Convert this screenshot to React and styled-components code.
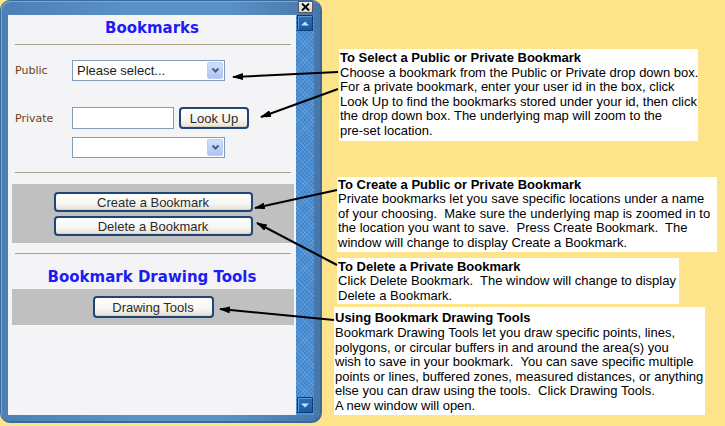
import React from 'react';
import styled, { createGlobalStyle } from 'styled-components';

const Global = createGlobalStyle`
  html, body { margin: 0; padding: 0; }
  body {
    width: 725px; height: 426px; overflow: hidden;
    background: #fde48b;
    font-family: "Liberation Sans", Arial, sans-serif;
  }
`;

const Page = styled.div`
  position: relative;
  width: 725px;
  height: 426px;
  display: flex;
  align-items: flex-start;
  background: #fde48b;
`;

const Window = styled.div`
  width: 322px;
  height: 423px;
  box-sizing: border-box;
  flex-shrink: 0;
  border: 1px solid #3c6b9b;
  border-radius: 10px;
  background: linear-gradient(90deg, #4b80b6 0%, #5a91c7 40%, #5a91c7 70%, #4677ab 100%);
  box-shadow: inset 1px 1px 0 #7aa8d6, inset -1px -1px 0 #3a6898;
  padding: 0 7px 7px 7px;
  display: flex;
  flex-direction: column;
`;

const TitleBar = styled.div`
  height: 14px;
  display: flex;
  justify-content: flex-end;
  align-items: flex-start;
`;

const CloseButton = styled.div`
  width: 15px;
  height: 12px;
  box-sizing: border-box;
  margin-right: 1px;
  background: linear-gradient(#f0f0f0, #d2d2d2);
  border: 1px solid #5a5a5a;
  display: flex;
  align-items: center;
  justify-content: center;
`;

const Body = styled.div`
  flex: 1;
  display: flex;
  min-height: 0;
`;

const Content = styled.div`
  width: 288px;
  background: #f4f4f7;
  display: flex;
  flex-direction: column;
`;

const Scrollbar = styled.div`
  width: 18px;
  display: flex;
  flex-direction: column;
  justify-content: space-between;
  align-items: flex-start;
  background-color: #3f86cf;
  background-image:
    repeating-linear-gradient(45deg, rgba(255,255,255,0.13) 0 1px, transparent 1px 3px),
    repeating-linear-gradient(-45deg, rgba(255,255,255,0.10) 0 1px, transparent 1px 3px);
`;

const ScrollButton = styled.div`
  width: 16px;
  height: 16px;
  box-sizing: border-box;
  margin-left: 1px;
  margin-bottom: ${p => (p.$down ? '2px' : '0')};
  background: linear-gradient(#2a6fbd, #1b5aa3);
  border: 1px solid #0e3b72;
  box-shadow: inset 1px 1px 0 #5e97d6;
  display: flex;
  align-items: center;
  justify-content: center;
`;

const Heading = styled.div`
  margin-top: ${p => p.$mt}px;
  line-height: 20px;
  font-family: "DejaVu Sans", Verdana, sans-serif;
  font-weight: bold;
  font-size: 15px;
  color: #1c1cf5;
  text-align: center;
`;

const Rule = styled.div`
  margin: ${p => p.$mt}px 5px 0 7px;
  border-top: 1px solid #aaa18a;
`;

const FormRow = styled.div`
  display: flex;
  align-items: center;
  margin-top: ${p => p.$mt}px;
  padding-left: ${p => (p.$indent ? 64 : 7)}px;
`;

const Label = styled.div`
  width: 57px;
  font-family: "DejaVu Sans", Verdana, sans-serif;
  font-size: 11px;
  color: #6b3e1c;
`;

const SelectBox = styled.div`
  width: 153px;
  height: 21px;
  box-sizing: border-box;
  border: 1px solid #7f9db9;
  background: #fff;
  display: flex;
  align-items: center;
  justify-content: space-between;
  padding: 1px 1px 1px 4px;
  font-size: 13px;
  color: #1a1a1a;
`;

const SelectArrow = styled.div`
  width: 16px;
  height: 17px;
  box-sizing: border-box;
  border: 1px solid #bccdf5;
  border-radius: 2px;
  background: linear-gradient(#d2e0fc, #adc4f3);
  display: flex;
  align-items: center;
  justify-content: center;
`;

const TextInput = styled.div`
  width: 102px;
  height: 22px;
  box-sizing: border-box;
  border: 1px solid #7f9db9;
  background: #fff;
`;

const Button = styled.div`
  width: ${p => p.$w}px;
  height: ${p => p.$h}px;
  box-sizing: border-box;
  margin-left: ${p => p.$ml || 0}px;
  border: 2px solid #1f4476;
  border-radius: 4px;
  background: linear-gradient(#ffffff 0%, #f6f5f0 60%, #e4e1d5 100%);
  box-shadow: inset 0 -1px 0 #d6d2c2;
  display: flex;
  align-items: center;
  justify-content: center;
  font-size: 13px;
  color: #2b2b2b;
`;

const Band = styled.div`
  margin: ${p => p.$mt}px 2px 0 4px;
  height: ${p => p.$h}px;
  box-sizing: border-box;
  padding-top: ${p => p.$pt}px;
  background: #c0c0c0;
  display: flex;
  flex-direction: column;
  align-items: center;
  gap: 4px;
`;

const RightColumn = styled.div`
  flex: 1;
  display: flex;
  flex-direction: column;
  align-items: flex-start;
`;

const Callout = styled.div`
  margin-top: ${p => p.$mt}px;
  margin-left: ${p => p.$ml}px;
  width: ${p => p.$w}px;
  box-sizing: border-box;
  padding: ${p => p.$pt}px 2px ${p => p.$pb}px 1px;
  background: #ffffff;
  font-size: 13px;
  line-height: 14.6px;
  color: #000;
`;

const CalloutTitle = styled.div`
  font-weight: bold;
  white-space: pre;
`;

const CalloutLine = styled.div`
  white-space: pre;
`;

const Overlay = styled.svg`
  position: absolute;
  left: 0;
  top: 0;
  pointer-events: none;
`;

const Chevron = () => (
  <svg width="9" height="7" viewBox="0 0 9 7">
    <polyline points="1.5,1.5 4.5,4.5 7.5,1.5" fill="none" stroke="#4b5f86" strokeWidth="2" />
  </svg>
);

const Select = ({ children }) => (
  <SelectBox>
    <span>{children}</span>
    <SelectArrow><Chevron /></SelectArrow>
  </SelectBox>
);

const callouts = [
  {
    mt: 49, ml: 17, w: 359, pt: 2, pb: 2,
    title: 'To Select a Public or Private Bookmark',
    lines: [
      'Choose a bookmark from the Public or Private drop down box.',
      'For a private bookmark, enter your user id in the box, click',
      'Look Up to find the bookmarks stored under your id, then click',
      'the drop down box. The underlying map will zoom to the',
      'pre-set location.',
    ],
  },
  {
    mt: 36, ml: 15, w: 380, pt: 1, pb: 1,
    title: 'To Create a Public or Private Bookmark',
    lines: [
      'Private bookmarks let you save specific locations under a name',
      'of your choosing.  Make sure the underlying map is zoomed in to',
      'the location you want to save.  Press Create Bookmark.  The',
      'window will change to display Create a Bookmark.',
    ],
  },
  {
    mt: 6, ml: 15, w: 342, pt: 2, pb: 1,
    title: 'To Delete a Private Bookmark',
    lines: [
      'Click Delete Bookmark.  The window will change to display',
      'Delete a Bookmark.',
    ],
  },
  {
    mt: 3, ml: 12, w: 371, pt: 4, pb: 2,
    title: 'Using Bookmark Drawing Tools',
    lines: [
      'Bookmark Drawing Tools let you draw specific points, lines,',
      'polygons, or circular buffers in and around the area(s) you',
      'wish to save in your bookmark.  You can save specific multiple',
      'points or lines, buffered zones, measured distances, or anything',
      'else you can draw using the tools.  Click Drawing Tools.',
      'A new window will open.',
    ],
  },
];

const arrows = [
  [338, 72, 233, 77],
  [338, 89, 261, 117],
  [337, 190, 255, 208],
  [337, 265, 257, 223],
  [334, 320, 220, 309],
];

export default function App() {
  return (
    <>
      <Global />
      <Page>
        <Window>
          <TitleBar>
            <CloseButton>
              <svg width="9" height="8" viewBox="0 0 9 8">
                <path d="M1 0.5 L8 7.5 M8 0.5 L1 7.5" stroke="#000" strokeWidth="1.8" />
              </svg>
            </CloseButton>
          </TitleBar>
          <Body>
            <Content>
              <Heading $mt={3}>Bookmarks</Heading>
              <Rule $mt={6} />
              <FormRow $mt={15}>
                <Label>Public</Label>
                <Select>Please select...</Select>
              </FormRow>
              <FormRow $mt={26}>
                <Label>Private</Label>
                <TextInput />
                <Button $w={70} $h={22} $ml={5}>Look Up</Button>
              </FormRow>
              <FormRow $mt={8} $indent>
                <Select />
              </FormRow>
              <Rule $mt={14} />
              <Band $mt={11} $h={59} $pt={8}>
                <Button $w={199} $h={20}>Create a Bookmark</Button>
                <Button $w={199} $h={20}>Delete a Bookmark</Button>
              </Band>
              <Rule $mt={10} />
              <Heading $mt={13}>Bookmark Drawing Tools</Heading>
              <Band $mt={2} $h={36} $pt={7}>
                <Button $w={121} $h={22}>Drawing Tools</Button>
              </Band>
            </Content>
            <Scrollbar>
              <ScrollButton>
                <svg width="8" height="5" viewBox="0 0 8 5"><polygon points="0,4.5 4,0.5 8,4.5" fill="#cfe0f5" /></svg>
              </ScrollButton>
              <ScrollButton $down>
                <svg width="8" height="5" viewBox="0 0 8 5"><polygon points="0,0.5 4,4.5 8,0.5" fill="#cfe0f5" /></svg>
              </ScrollButton>
            </Scrollbar>
          </Body>
        </Window>
        <RightColumn>
          {callouts.map((c, i) => (
            <Callout key={i} $mt={c.mt} $ml={c.ml} $w={c.w} $pt={c.pt} $pb={c.pb}>
              <CalloutTitle>{c.title}</CalloutTitle>
              {c.lines.map((l, j) => (
                <CalloutLine key={j}>{l}</CalloutLine>
              ))}
            </Callout>
          ))}
        </RightColumn>
        <Overlay width="725" height="426" viewBox="0 0 725 426">
          <defs>
            <marker id="head" markerWidth="11" markerHeight="7" refX="10" refY="3.5" orient="auto" markerUnits="userSpaceOnUse">
              <polygon points="0,0 11,3.5 0,7" fill="#000" />
            </marker>
          </defs>
          {arrows.map(([x1, y1, x2, y2], i) => (
            <line key={i} x1={x1} y1={y1} x2={x2} y2={y2} stroke="#000" strokeWidth="2" markerEnd="url(#head)" />
          ))}
        </Overlay>
      </Page>
    </>
  );
}
